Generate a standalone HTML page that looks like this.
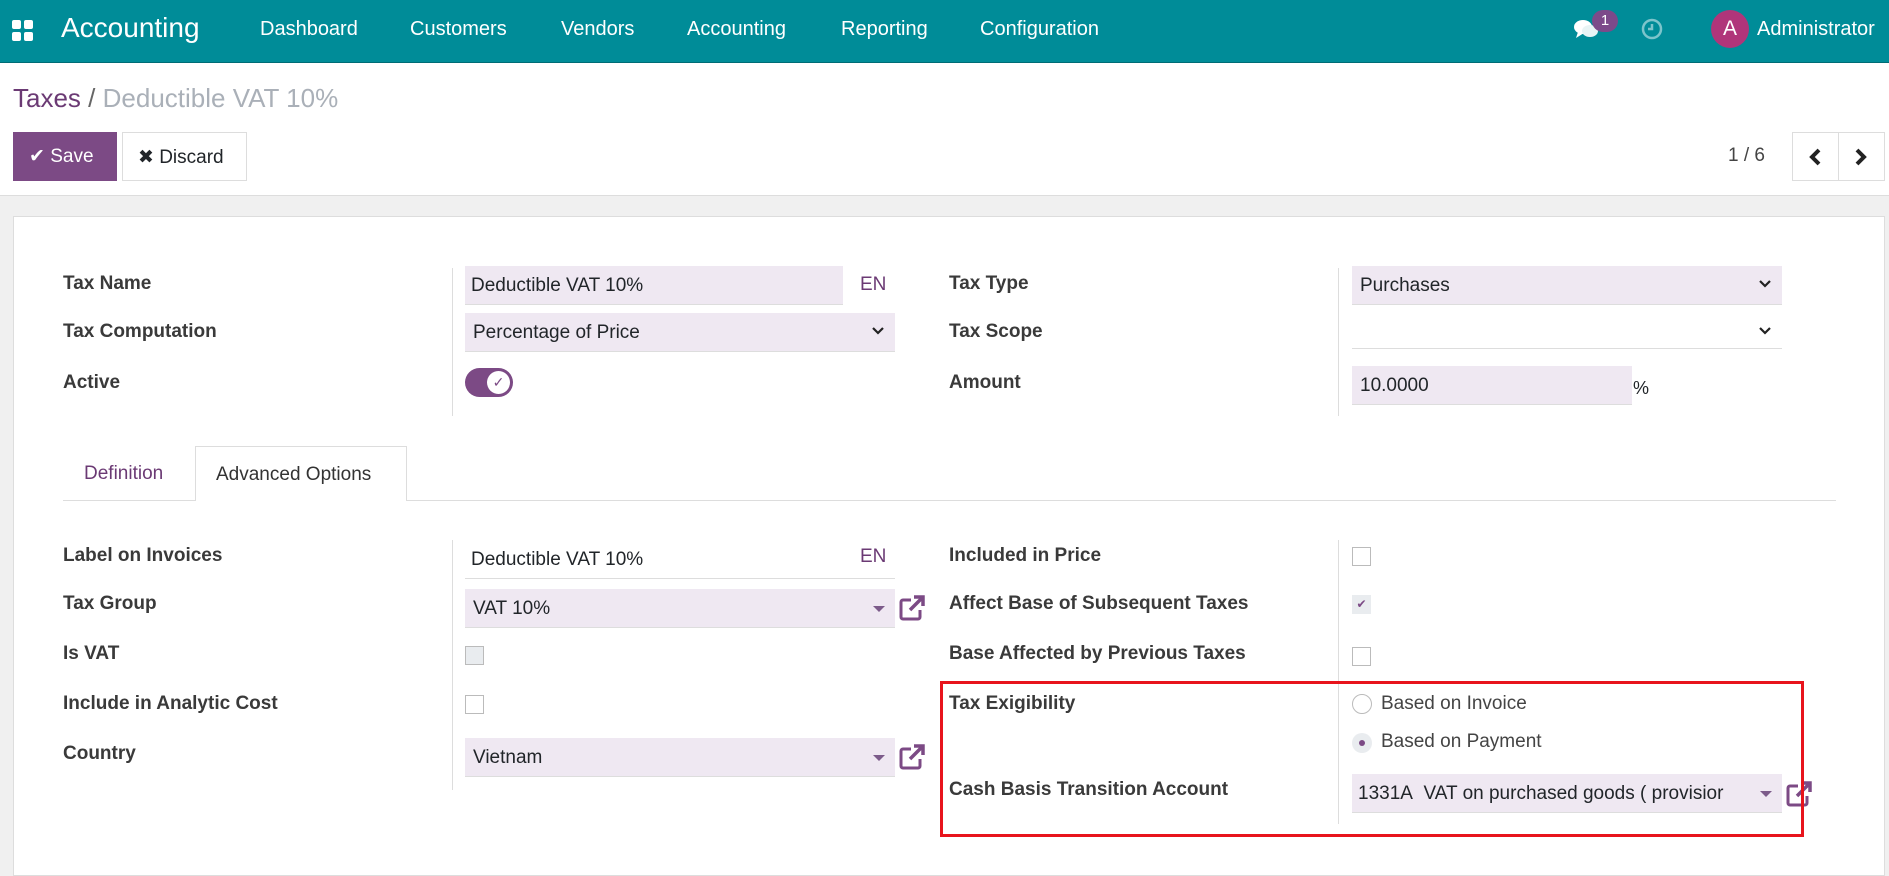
<!DOCTYPE html>
<html><head><meta charset="utf-8"><style>
*{box-sizing:border-box;margin:0;padding:0}
body{width:1889px;height:868px;overflow:hidden;font-family:"Liberation Sans",sans-serif;background:#f0f0f0;color:#212529;position:relative;font-size:19px}
.a{position:absolute;white-space:nowrap}
.nav{left:0;top:0;width:1889px;height:63px;background:#008c98;border-bottom:1px solid #006c75}
.nav .a{color:#fff;top:18px;font-size:20px}
.cp{left:0;top:63px;width:1889px;height:133px;background:#fff;border-bottom:1px solid #ddd}
.sheet{left:13px;top:216px;width:1872px;height:660px;background:#fff;border:1px solid #ddd}
.lbl{font-weight:bold;font-size:19px;color:#3a3a3a}
.inp{background:#efe8f2;height:39px;border-bottom:1px solid #ddd;padding:9px 8px 0;font-size:19px}
.sep{width:1px;background:#ddd}
.cb{width:19px;height:19px;border:1px solid #bbb;background:#fff}
.ext{width:28px;height:28px}
.caret{position:absolute;right:10px;top:17px;border-left:6px solid transparent;border-right:6px solid transparent;border-top:6px solid #7c5b8a}
.chev{position:absolute;right:10px;top:13px}
</style></head><body>
<div class="a nav">
 <svg class="a" style="left:12px;top:20px" width="22" height="22" viewBox="0 0 22 22" fill="#fff"><rect x="0" y="0" width="9" height="9" rx="2"/><rect x="12" y="0" width="9" height="9" rx="2"/><rect x="0" y="12" width="9" height="9" rx="2"/><rect x="12" y="12" width="9" height="9" rx="2"/></svg>
 <div class="a" style="left:61px;top:12px;font-size:28px">Accounting</div>
 <div class="a" style="left:260px">Dashboard</div>
 <div class="a" style="left:410px">Customers</div>
 <div class="a" style="left:561px">Vendors</div>
 <div class="a" style="left:687px">Accounting</div>
 <div class="a" style="left:841px">Reporting</div>
 <div class="a" style="left:980px">Configuration</div>
 <svg class="a" style="left:1573px;top:17px" width="28" height="24" viewBox="0 0 28 24" fill="#fff"><ellipse cx="10" cy="10" rx="9" ry="7"/><path d="M5 15 L3 21 L11 16Z"/><ellipse cx="17" cy="14" rx="8" ry="6" fill="#e8f4f5"/></svg>
 <div class="a" style="left:1592px;top:10px;width:26px;height:22px;border-radius:11px;background:#7c4a8a;font-size:15px;text-align:center;line-height:22px">1</div>
 <svg class="a" style="left:1641px;top:18px" width="22" height="22" viewBox="0 0 22 22" fill="none" stroke="#7cc4cb" stroke-width="2.5"><circle cx="11" cy="11" r="9"/><path d="M11 6v5h-4"/></svg>
 <div class="a" style="left:1711px;top:10px;width:38px;height:38px;border-radius:50%;background:#b0357a;text-align:center;line-height:38px;font-size:21px;top:10px">A</div>
 <div class="a" style="left:1757px;top:18px">Administrator</div>
</div>
<div class="a cp">
 <div class="a" style="left:13px;top:20px;font-size:26px"><span style="color:#6b3a74">Taxes</span> <span style="color:#666">/</span> <span style="color:#aab0b8">Deductible VAT 10%</span></div>
 <div class="a" style="left:13px;top:69px;width:104px;height:49px;background:#7c4a85;color:#fff;padding:13px 0 0 16px">✔ Save</div>
 <div class="a" style="left:122px;top:69px;width:125px;height:49px;border:1px solid #ddd;background:#fff;padding:13px 0 0 15px">✖ Discard</div>
 <div class="a" style="left:1728px;top:82px;color:#444">1 / 6</div>
 <div class="a" style="left:1792px;top:69px;width:93px;height:49px;border:1px solid #ddd;background:#fff"><div class="a" style="left:45px;top:0;width:1px;height:47px;background:#ddd"></div>
 <svg class="a" style="left:15px;top:15px" width="14" height="18" viewBox="0 0 14 18" fill="none" stroke="#222" stroke-width="4"><path d="M11 2L4 9l7 7"/></svg>
 <svg class="a" style="left:61px;top:15px" width="14" height="18" viewBox="0 0 14 18" fill="none" stroke="#222" stroke-width="4"><path d="M3 2l7 7-7 7"/></svg></div>
</div>
<div class="a sheet"></div>
<!-- top group -->
<div class="a lbl" style="left:63px;top:273px">Tax Name</div>
<div class="a lbl" style="left:63px;top:321px">Tax Computation</div>
<div class="a lbl" style="left:63px;top:372px">Active</div>
<div class="a sep" style="left:452px;top:268px;height:148px"></div>
<div class="a inp" style="left:465px;top:266px;width:378px;padding-left:6px">Deductible VAT 10%</div>
<div class="a" style="left:860px;top:274px;color:#6b3a74">EN</div>
<div class="a inp" style="left:465px;top:313px;width:430px">Percentage of Price<svg class="chev" width="14" height="10" viewBox="0 0 14 10" fill="none" stroke="#222" stroke-width="2.2"><path d="M2 2l5 5 5-5"/></svg></div>
<div class="a" style="left:465px;top:368px;width:48px;height:29px;border-radius:15px;background:#7c4a85"><div class="a" style="left:22px;top:3px;width:23px;height:23px;border-radius:50%;background:#fff;color:#7c4a85;font-size:14px;text-align:center;line-height:23px">✓</div></div>
<div class="a lbl" style="left:949px;top:273px">Tax Type</div>
<div class="a lbl" style="left:949px;top:321px">Tax Scope</div>
<div class="a lbl" style="left:949px;top:372px">Amount</div>
<div class="a sep" style="left:1338px;top:268px;height:148px"></div>
<div class="a inp" style="left:1352px;top:266px;width:430px">Purchases<svg class="chev" width="14" height="10" viewBox="0 0 14 10" fill="none" stroke="#222" stroke-width="2.2"><path d="M2 2l5 5 5-5"/></svg></div>
<div class="a" style="left:1352px;top:313px;width:430px;height:36px;border-bottom:1px solid #ddd"><svg class="chev" width="14" height="10" viewBox="0 0 14 10" fill="none" stroke="#222" stroke-width="2.2"><path d="M2 2l5 5 5-5"/></svg></div>
<div class="a inp" style="left:1352px;top:366px;width:280px">10.0000</div>
<div class="a" style="left:1633px;top:378px;font-size:18px">%</div>
<!-- tabs -->
<div class="a" style="left:63px;top:500px;width:1773px;height:1px;background:#ddd"></div>
<div class="a" style="left:84px;top:463px;color:#6b3a74">Definition</div>
<div class="a" style="left:195px;top:446px;width:212px;height:55px;border:1px solid #ddd;border-bottom:none;background:#fff;padding:17px 0 0 20px;color:#333">Advanced Options</div>
<!-- lower left -->
<div class="a lbl" style="left:63px;top:545px">Label on Invoices</div>
<div class="a lbl" style="left:63px;top:593px">Tax Group</div>
<div class="a lbl" style="left:63px;top:643px">Is VAT</div>
<div class="a lbl" style="left:63px;top:693px">Include in Analytic Cost</div>
<div class="a lbl" style="left:63px;top:743px">Country</div>
<div class="a sep" style="left:452px;top:540px;height:250px"></div>
<div class="a" style="left:465px;top:540px;width:430px;height:39px;border-bottom:1px solid #ddd;padding:9px 6px 0">Deductible VAT 10%</div>
<div class="a" style="left:860px;top:546px;color:#6b3a74">EN</div>
<div class="a inp" style="left:465px;top:589px;width:430px">VAT 10%<span class="caret"></span></div>
<svg class="a ext" style="left:898px;top:594px" viewBox="0 0 28 28" fill="none" stroke="#7c4a85" stroke-width="3"><path d="M13 6H5a2 2 0 0 0-2 2v15a2 2 0 0 0 2 2h15a2 2 0 0 0 2-2v-7"/><path d="M12 16L24 4M16 3h9v9" stroke-width="3.5"/></svg>
<div class="a cb" style="left:465px;top:646px;background:#e9ecef"></div>
<div class="a cb" style="left:465px;top:695px"></div>
<div class="a inp" style="left:465px;top:738px;width:430px">Vietnam<span class="caret"></span></div>
<svg class="a ext" style="left:898px;top:743px" viewBox="0 0 28 28" fill="none" stroke="#7c4a85" stroke-width="3"><path d="M13 6H5a2 2 0 0 0-2 2v15a2 2 0 0 0 2 2h15a2 2 0 0 0 2-2v-7"/><path d="M12 16L24 4M16 3h9v9" stroke-width="3.5"/></svg>
<!-- lower right -->
<div class="a lbl" style="left:949px;top:545px">Included in Price</div>
<div class="a lbl" style="left:949px;top:593px">Affect Base of Subsequent Taxes</div>
<div class="a lbl" style="left:949px;top:643px">Base Affected by Previous Taxes</div>
<div class="a lbl" style="left:949px;top:693px">Tax Exigibility</div>
<div class="a lbl" style="left:949px;top:779px">Cash Basis Transition Account</div>
<div class="a sep" style="left:1338px;top:540px;height:284px"></div>
<div class="a cb" style="left:1352px;top:547px"></div>
<div class="a cb" style="left:1352px;top:595px;background:#e9ecef;border-color:#e9ecef;color:#7c4a85;font-size:12px;text-align:center;line-height:17px">✔</div>
<div class="a cb" style="left:1352px;top:647px"></div>
<div class="a" style="left:1352px;top:694px;width:20px;height:20px;border-radius:50%;border:1px solid #bbb"></div>
<div class="a" style="left:1381px;top:693px;color:#444">Based on Invoice</div>
<div class="a" style="left:1352px;top:733px;width:20px;height:20px;border-radius:50%;background:#e9ecef"><div class="a" style="left:7px;top:7px;width:6px;height:6px;border-radius:50%;background:#7c4a85"></div></div>
<div class="a" style="left:1381px;top:731px;color:#444">Based on Payment</div>
<div class="a inp" style="left:1352px;top:774px;width:430px;overflow:hidden;padding-left:6px">1331A&nbsp; VAT on purchased goods ( provisior<span class="caret" style="background:#efe8f2"></span></div>
<svg class="a ext" style="left:1785px;top:780px" viewBox="0 0 28 28" fill="none" stroke="#7c4a85" stroke-width="3"><path d="M13 6H5a2 2 0 0 0-2 2v15a2 2 0 0 0 2 2h15a2 2 0 0 0 2-2v-7"/><path d="M12 16L24 4M16 3h9v9" stroke-width="3.5"/></svg>
<div class="a" style="left:940px;top:681px;width:864px;height:156px;border:3px solid #e8141c"></div>
</body></html>
